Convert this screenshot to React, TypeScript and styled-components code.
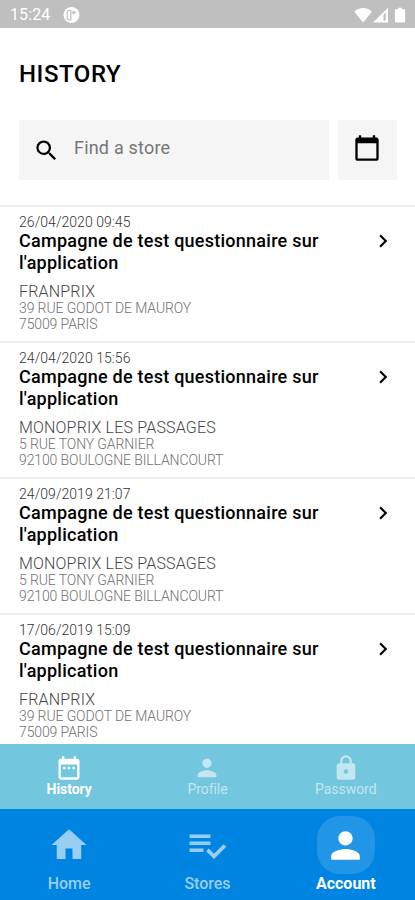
import React from "react";
import styled, { createGlobalStyle } from "styled-components";
import {
  MdCalendarToday,
  MdChevronRight,
  MdDateRange,
  MdHome,
  MdLock,
  MdPerson,
  MdSearch,
} from "react-icons/md";

const GlobalStyle = createGlobalStyle`
  *, *::before, *::after { box-sizing: border-box; }
  body { margin: 0; background: #fff; font-family: Roboto, "Liberation Sans", sans-serif; }
`;

const Screen = styled.main`
  display: flex;
  flex-direction: column;
  width: 100%;
  height: 900px;
  overflow: hidden;
  background: #fff;
  color: #000;
`;

const StatusBar = styled.header`
  display: flex;
  flex: none;
  align-items: center;
  height: 28px;
  padding: 2px 8px 0 10px;
  background: #bfbfbf;
  color: #fff;
`;

const Clock = styled.span`
  width: 53px;
  font-size: 16px;
  line-height: 20px;
  letter-spacing: 0.1px;
`;

const StatusIcons = styled.div`
  display: flex;
  margin-left: auto;
`;

const Title = styled.h1`
  flex: none;
  margin: 0;
  padding: 30px 19px 0;
  height: 92px;
  font-size: 24px;
  line-height: 32px;
  font-weight: 500;
  letter-spacing: 0.55px;
`;

const SearchRow = styled.div`
  display: flex;
  flex: none;
  gap: 9px;
  height: 85px;
  padding: 0 18px 25px 19px;
`;

const SearchField = styled.label`
  display: flex;
  flex: 1;
  align-items: center;
  min-width: 0;
  padding-left: 14px;
  background: #f5f5f5;
  svg { flex: none; }
`;

const SearchInput = styled.input`
  flex: 1;
  min-width: 0;
  margin: 0 0 5px 14px;
  padding: 0;
  border: 0;
  outline: 0;
  background: transparent;
  font: 400 18px/24px Roboto, "Liberation Sans", sans-serif;
  letter-spacing: 0.2px;
  &::placeholder { color: #777; opacity: 1; }
`;

const DateButton = styled.button`
  display: flex;
  align-items: center;
  justify-content: center;
  width: 59px;
  padding: 0 1px 4px 0;
  border: 0;
  background: #f5f5f5;
  color: #000;
`;

const VisitList = styled.ul`
  flex: 1;
  min-height: 0;
  margin: 0;
  padding: 0;
  overflow: hidden;
  list-style: none;
`;

const Visit = styled.li`
  display: flex;
  justify-content: space-between;
  height: 136px;
  padding: 7px 19px 0 19px;
  border-top: 2px solid #f0f0f0;
`;

const VisitBody = styled.div`
  width: 330px;
`;

const VisitDate = styled.div`
  font-size: 14px;
  line-height: 16px;
  font-weight: 300;
  letter-spacing: 0.05px;
  color: #333;
`;

const VisitTitle = styled.h2`
  margin: 0 0 9px;
  font-size: 18px;
  line-height: 22px;
  font-weight: 500;
  letter-spacing: 0.25px;
`;

const StoreName = styled.div`
  font-size: 16px;
  line-height: 17px;
  font-weight: 300;
  letter-spacing: 0.18px;
  color: #444;
`;

const Address = styled.div`
  font-size: 14px;
  line-height: 16px;
  font-weight: 300;
  letter-spacing: -0.11px;
  color: #707070;
`;

const Arrow = styled.div`
  margin-top: 14px;
  height: 26px;
`;

const SubTabs = styled.nav`
  display: grid;
  flex: none;
  grid-template-columns: repeat(3, 1fr);
  height: 65px;
  background: #72c6de;
`;

const SubTab = styled.a<{ $active?: boolean }>`
  display: flex;
  flex-direction: column;
  align-items: center;
  padding-top: 10px;
  color: ${(p) => (p.$active ? "#fff" : "#c3e7f1")};
  font-size: 14px;
  line-height: 15px;
  font-weight: ${(p) => (p.$active ? 700 : 400)};
  letter-spacing: -0.05px;
  svg { flex: none; }
`;

const MainTabs = styled.nav`
  display: grid;
  flex: none;
  grid-template-columns: repeat(3, 1fr);
  height: 91px;
  background: #0084e2;
`;

const MainTab = styled.a<{ $active?: boolean }>`
  display: flex;
  flex-direction: column;
  align-items: center;
  padding-top: 7px;
  color: ${(p) => (p.$active ? "#fff" : "#99cef3")};
  font-size: 16px;
  line-height: 18px;
  font-weight: ${(p) => (p.$active ? 700 : 500)};
`;

const IconPad = styled.span<{ $active?: boolean }>`
  display: flex;
  align-items: center;
  justify-content: center;
  width: 58px;
  height: 58px;
  margin-bottom: 1px;
  border-radius: 23px;
  background: ${(p) => (p.$active ? "#2296e6" : "transparent")};
`;

const visits = [
  { date: "26/04/2020 09:45", store: "FRANPRIX", street: "39 RUE GODOT DE MAUROY", city: "75009 PARIS" },
  { date: "24/04/2020 15:56", store: "MONOPRIX LES PASSAGES", street: "5 RUE TONY GARNIER", city: "92100 BOULOGNE BILLANCOURT" },
  { date: "24/09/2019 21:07", store: "MONOPRIX LES PASSAGES", street: "5 RUE TONY GARNIER", city: "92100 BOULOGNE BILLANCOURT" },
  { date: "17/06/2019 15:09", store: "FRANPRIX", street: "39 RUE GODOT DE MAUROY", city: "75009 PARIS" },
];

const AppBadge = () => (
  <svg width="17" height="17" viewBox="0 0 17 17">
    <circle cx="8.500" cy="8" r="8" fill="#fff" />
    <path d="M7.800 12.800H5.500q-1.300 0-1.300-1.500V5q0-1.500 1.300-1.500h2.300z" fill="none" stroke="#bfbfbf" strokeWidth="1.200" />
    <path d="M10.800 3.500v4M8.800 5.500h4" stroke="#bfbfbf" strokeWidth="1.300" />
  </svg>
);

const Signals = () => (
  <svg width="53" height="17" viewBox="0 0 53 17">
    <path d="M.3 4.700C5-.1 13.200-.1 17.900 4.700L9.100 15.600z" fill="#fff" />
    <path d="M19 15.500 34 .8v14.700z" fill="#fff" />
    <path d="M29.500 7.800 31.700 5.600v8.100h-2.200z" fill="#bfbfbf" />
    <path d="M44 .8h4v1.500h2.200q1 0 1 1v11.200q0 1-1 1h-8.300q-1 0-1-1V3.300q0-1 1-1H44z" fill="#fff" />
  </svg>
);

const ChecklistIcon = () => (
  <svg width="42" height="42" viewBox="0 0 24 24" fill="currentColor">
    <path d="M14 10H2v2h12v-2zm0-4H2v2h12V6zM2 16h8v-2H2v2zm19.500-4.500L23 13l-6.990 7-4.510-4.500L13 14l3.010 3 5.490-5.500z" />
  </svg>
);

export default function App() {
  return (
    <Screen>
      <GlobalStyle />
      <StatusBar>
        <Clock>15:24</Clock>
        <AppBadge />
        <StatusIcons><Signals /></StatusIcons>
      </StatusBar>
      <Title>HISTORY</Title>
      <SearchRow>
        <SearchField>
          <MdSearch size={27} />
          <SearchInput placeholder="Find a store" />
        </SearchField>
        <DateButton aria-label="Choose a date"><MdCalendarToday size={28} /></DateButton>
      </SearchRow>
      <VisitList>
        {visits.map((v) => (
          <Visit key={v.date}>
            <VisitBody>
              <VisitDate>{v.date}</VisitDate>
              <VisitTitle>Campagne de test questionnaire sur l'application</VisitTitle>
              <StoreName>{v.store}</StoreName>
              <Address>{v.street}</Address>
              <Address>{v.city}</Address>
            </VisitBody>
            <Arrow><MdChevronRight size={26} /></Arrow>
          </Visit>
        ))}
      </VisitList>
      <SubTabs>
        <SubTab $active><MdDateRange size={28} />History</SubTab>
        <SubTab><MdPerson size={28} />Profile</SubTab>
        <SubTab><MdLock size={28} />Password</SubTab>
      </SubTabs>
      <MainTabs>
        <MainTab><IconPad><MdHome size={42} /></IconPad>Home</MainTab>
        <MainTab><IconPad><ChecklistIcon /></IconPad>Stores</MainTab>
        <MainTab $active><IconPad $active><MdPerson size={43} /></IconPad>Account</MainTab>
      </MainTabs>
    </Screen>
  );
}
